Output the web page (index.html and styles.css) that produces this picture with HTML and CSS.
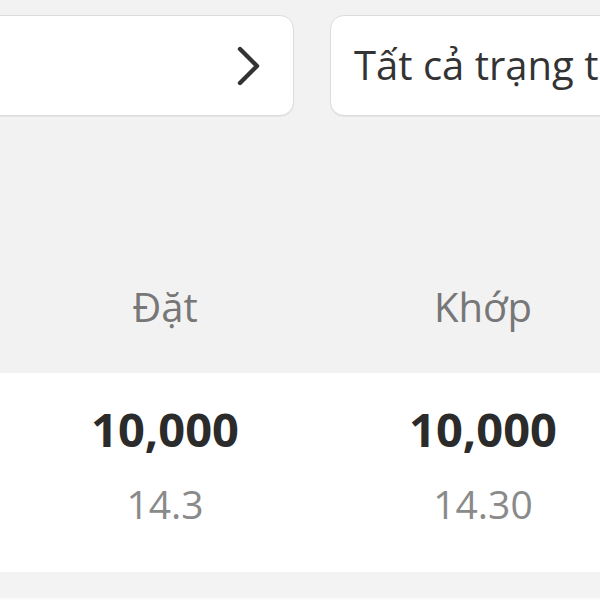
FILE: index.html
```html
<!DOCTYPE html>
<html lang="vi">
<head>
<meta charset="utf-8">
<link rel="stylesheet" href="styles.css">
</head>
<body>
<div class="page">
  <div class="filters">
    <div class="card card-left">
      <svg class="chev" width="26" height="40" viewBox="0 0 26 40"><path d="M4 3 L21 20 L4 37" fill="none" stroke="#333" stroke-width="4.4" stroke-linecap="round" stroke-linejoin="round"/></svg>
    </div>
    <div class="card card-right"><span class="card-text">Tất cả trạng thái</span></div>
  </div>
  <div class="head grid">
    <div class="cell label">Đặt</div>
    <div class="cell label">Khớp</div>
  </div>
  <div class="row grid">
    <div class="cell">
      <div class="qty">10,000</div>
      <div class="price">14.3</div>
    </div>
    <div class="cell">
      <div class="qty">10,000</div>
      <div class="price">14.30</div>
    </div>
  </div>
  <div class="foot"></div>
  <div class="foot-line"></div>
</div>
</body>
</html>
```
FILE: styles.css
```css
html, body {
  margin: 0;
  padding: 0;
  width: 600px;
  height: 600px;
  overflow: hidden;
  background: #f2f2f2;
  font-family: "Open Sans", "Noto Sans", sans-serif;
}
.page {
  width: 600px;
  overflow: hidden;
}
.filters {
  display: flex;
  gap: 36px;
  padding-top: 15px;
  margin-left: -22px;
  width: 800px;
}
.card {
  box-sizing: border-box;
  height: 101px;
  background: #fff;
  border: 1px solid #dcdcdc;
  border-radius: 14px;
  box-shadow: 0 1px 1px rgba(0,0,0,0.06);
  display: flex;
  align-items: center;
  flex: none;
}
.card-left {
  width: 316px;
  justify-content: flex-end;
  padding-right: 31px;
}
.card-right {
  width: 400px;
  padding-left: 23px;
  overflow: hidden;
  white-space: nowrap;
}
.card-text {
  font-size: 40px;
  color: #333;
  line-height: 52px;
  position: relative;
  top: -1px;
}
.grid {
  display: grid;
  grid-template-columns: 318px 318px;
  padding-left: 6px;
}
.cell {
  text-align: center;
}
.head {
  height: 257px;
  box-sizing: border-box;
  padding-top: 166px;
}
.label {
  font-size: 40px;
  line-height: 50px;
  color: #777;
}
.row {
  background: #fff;
  height: 199px;
  box-sizing: border-box;
  padding-top: 28px;
}
.qty {
  font-size: 47px;
  font-weight: 700;
  line-height: 56px;
  color: #2b2b2b;
}
.price {
  margin-top: 21px;
  font-size: 39px;
  font-weight: 400;
  line-height: 52px;
  color: #8a8a8a;
}
.foot {
  height: 26px;
  background: #f3f3f3;
}
.foot-line {
  height: 2px;
  background: #fbfbfb;
}
```
